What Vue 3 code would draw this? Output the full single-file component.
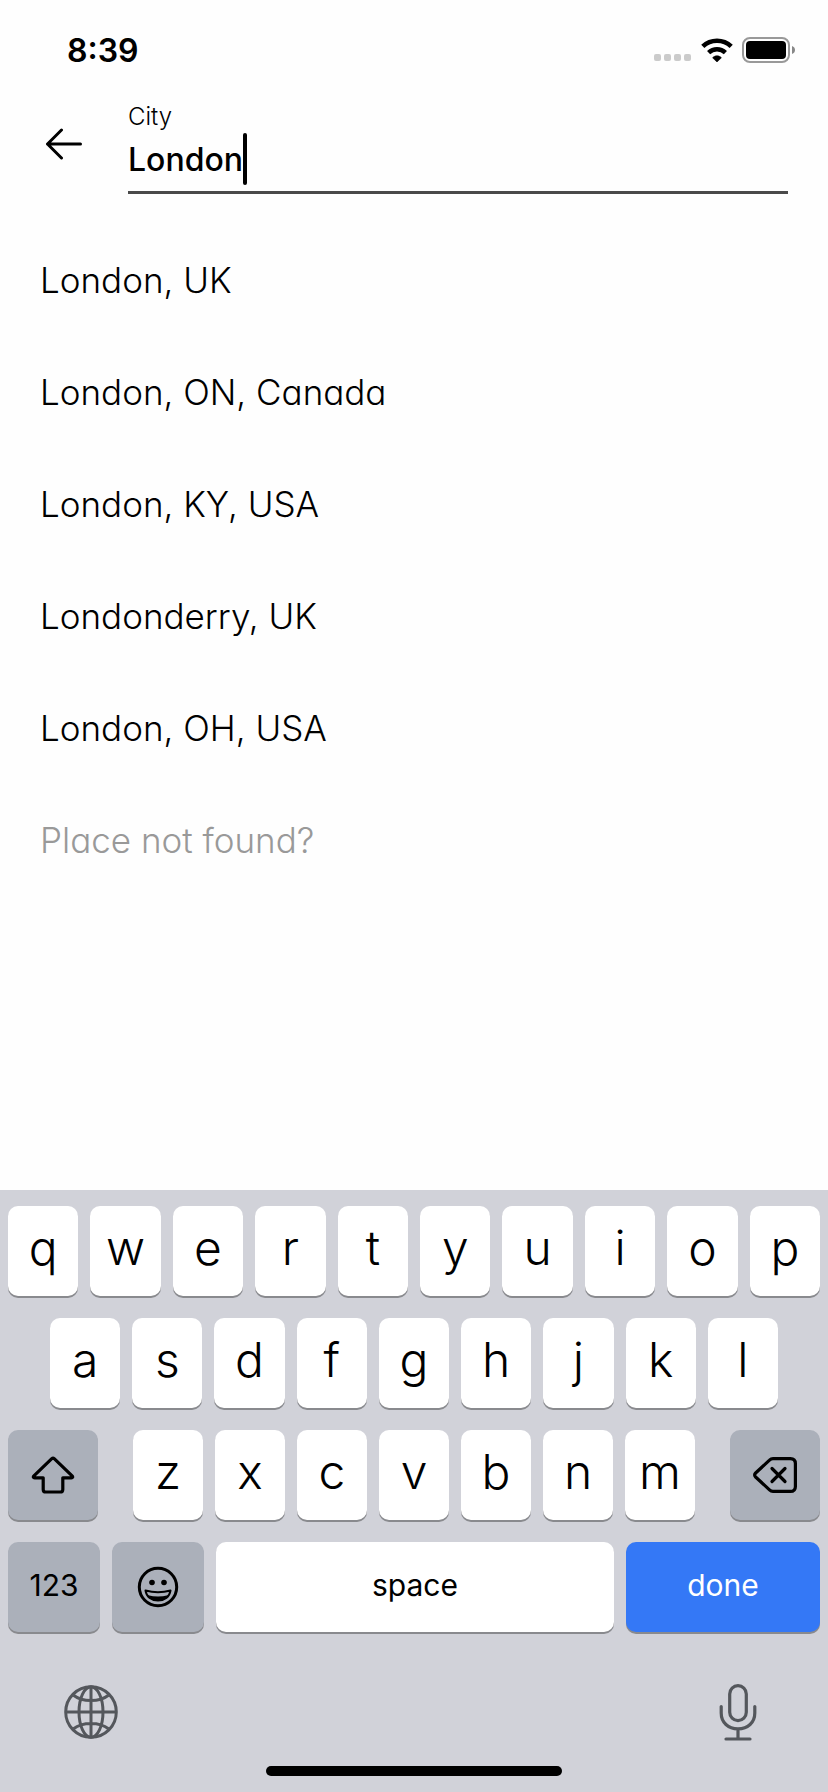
<script setup>
import { ref } from 'vue'

const city = ref('London')
const places = [
  'London, UK',
  'London, ON, Canada',
  'London, KY, USA',
  'Londonderry, UK',
  'London, OH, USA',
]
const topRow = 'qwertyuiop'.split('')
const homeRow = 'asdfghjkl'.split('')
const bottomRow = 'zxcvbnm'.split('')

const type = (ch) => { city.value += ch }
const erase = () => { city.value = city.value.slice(0, -1) }
</script>

<template>
  <div class="screen">
    <div class="status">
      <span class="time">8:39</span>
      <div class="indicators">
        <svg width="38" height="24" viewBox="0 0 38 24" fill="#cbcbcb">
          <rect x="0" y="16" width="7" height="7" rx="2" />
          <rect x="10" y="16" width="7" height="7" rx="2" />
          <rect x="20" y="16" width="7" height="7" rx="2" />
          <rect x="30" y="16" width="7" height="7" rx="2" />
        </svg>
        <svg width="32" height="24" viewBox="0 0 32 24">
          <g fill="none" stroke="#000" stroke-width="4.6">
            <path d="M1.8 8.4a20.6 20.6 0 0 1 28.4 0" />
            <path d="M7.6 14.6a12.4 12.4 0 0 1 16.8 0" />
          </g>
          <path d="M16 24l-4.4-4.2c2.4-2.6 6.400-2.6 8.800 0z" stroke="#000" stroke-width=".6" />
        </svg>
        <svg width="54" height="26" viewBox="0 0 54 26">
          <rect x="1" y="1" width="46" height="24" rx="7" fill="none" stroke="#999" stroke-width="2" />
          <rect x="4" y="4" width="40" height="18" rx="4" />
          <path d="M50 9c4 1.300 4 6.700 0 8z" fill="#888" />
        </svg>
      </div>
    </div>

    <header class="search">
      <button class="back" aria-label="Back">
        <svg width="38" height="32" viewBox="0 0 38 32" fill="none" stroke="#000" stroke-width="3" stroke-linecap="round" stroke-linejoin="round">
          <path d="M35.500 16H2.500M16.500 2L2.500 16l14 14" />
        </svg>
      </button>
      <div class="field">
        <label for="city">City</label>
        <div class="entry">
          <input id="city" v-model="city" type="text" autocomplete="off" size="6" />
          <span class="caret"></span>
        </div>
      </div>
    </header>

    <ul class="places">
      <li v-for="p in places" :key="p"><button>{{ p }}</button></li>
      <li><button class="muted">Place not found?</button></li>
    </ul>

    <div class="keyboard">
      <div class="row">
        <button v-for="k in topRow" :key="k" class="key" @click="type(k)">{{ k }}</button>
      </div>
      <div class="row home">
        <button v-for="k in homeRow" :key="k" class="key" @click="type(k)">{{ k }}</button>
      </div>
      <div class="row third">
        <button class="key dark side" aria-label="Shift">
          <svg width="44" height="38" viewBox="0 0 44 38" fill="none" stroke="#000" stroke-width="3.200" stroke-linejoin="round">
            <path d="M20.800 2.700 2.900 19.900c-1 1-.6 1.900.7 1.900h8.600v11.600c0 1.800.8 2.600 2.600 2.600h14.400c1.800 0 2.600-.8 2.600-2.600V21.800h8.600c1.300 0 1.700-.9.7-1.900L23.200 2.700q-1.200-1.100-2.400 0z" />
          </svg>
        </button>
        <div class="letters">
          <button v-for="k in bottomRow" :key="k" class="key" @click="type(k)">{{ k }}</button>
        </div>
        <button class="key dark side" aria-label="Delete" @click="erase">
          <svg width="44" height="38" viewBox="0 0 44 38" fill="none" stroke="#000" stroke-width="3.200" stroke-linejoin="round" stroke-linecap="round">
            <path d="M20 2.600h17.400q5 0 5 5v22.800q0 5-5 5H20q-2 0-3.500-1.500L2.600 21q-2-2 0-4L16.500 4.100Q18 2.600 20 2.600z" />
            <path d="M19 12.500 32 25.500M32 12.500 19 25.500" />
          </svg>
        </button>
      </div>
      <div class="row">
        <button class="key dark word mode">123</button>
        <button class="key dark mode emoji" aria-label="Emoji">
          <svg width="42" height="42" viewBox="0 0 42 42">
            <circle cx="21" cy="21" r="18.700" fill="none" stroke="#000" stroke-width="3" />
            <circle cx="15" cy="16.500" r="2.800" />
            <circle cx="27" cy="16.500" r="2.800" />
            <path d="M8.500 24.500q12.500 3.400 25 0c-1 6.400-6 10-12.500 10S9.500 30.900 8.500 24.500z" fill="none" stroke="#000" stroke-width="2" stroke-linejoin="round" />
            <path d="M11 29.200q10 2.400 20 0c-2 3.800-6 5.300-10 5.300s-8-1.500-10-5.300z" />
          </svg>
        </button>
        <button class="key word space" @click="type(' ')">space</button>
        <button class="key word done">done</button>
      </div>

      <div class="tools">
        <button aria-label="Next keyboard">
          <svg width="56" height="56" viewBox="0 0 56 56" fill="none" stroke="#54575c" stroke-width="3">
            <circle cx="28" cy="28" r="25.300" />
            <ellipse cx="28" cy="28" rx="12" ry="25.300" />
            <path d="M28 2.700v50.600M2.700 28h50.600M10.500 11.200c9 7 26 7 35 0M10.500 44.800c9-7 26-7 35 0" />
          </svg>
        </button>
        <button aria-label="Dictation">
          <svg width="38" height="58" viewBox="0 0 38 58" fill="none" stroke="#54575c" stroke-width="3.200" stroke-linecap="round">
            <rect x="10.700" y="2.600" width="16.600" height="35" rx="8.300" />
            <path d="M2.200 23.500v6.500c0 9.600 7 15.800 16.800 15.800S35.800 39.600 35.800 30v-6.500M19 46v10M7 56h24" />
          </svg>
        </button>
      </div>
      <div class="home-bar"></div>
    </div>
  </div>
</template>

<style>
body {
  margin: 0;
  background: #fefefe;
}
</style>

<style scoped>
.screen {
  min-height: 100vh;
  display: flex;
  flex-direction: column;
  font-family: Inter, "Liberation Sans", sans-serif;
  color: #000;
}
svg {
  display: block;
  flex: none;
}
button {
  border: 0;
  padding: 0;
  background: none;
  font: inherit;
  color: inherit;
}
.status {
  height: 100px;
  padding: 0 32px 0 67px;
  display: flex;
  align-items: center;
  justify-content: space-between;
}
.time {
  font-size: 32px;
  font-weight: 600;
}
.indicators {
  display: flex;
  align-items: center;
  gap: 9px;
}
.search {
  display: flex;
  align-items: flex-start;
  padding: 0 40px 0 45px;
}
.back {
  width: 83px;
  padding-top: 28px;
}
.field {
  flex: 1;
  display: flex;
  flex-direction: column;
  border-bottom: 3px solid #4a4a4a;
}
.field label {
  font-size: 24px;
  font-weight: 300;
  line-height: 33px;
}
.entry {
  height: 58px;
  display: flex;
  align-items: flex-start;
}
.entry input {
  field-sizing: content;
  min-width: 0;
  height: 52px;
  padding: 0;
  border: 0;
  outline: 0;
  background: none;
  font: inherit;
  font-size: 32px;
  font-weight: 500;
  color: inherit;
  caret-color: transparent;
}
.caret {
  width: 4px;
  height: 52px;
  border-radius: 2px;
  background: #000;
}
.places {
  list-style: none;
  margin: 30px 0 0;
  padding: 0;
}
.places button {
  display: block;
  width: 100%;
  height: 112px;
  padding: 0 40px;
  text-align: left;
  font-size: 35px;
  font-weight: 300;
  font-feature-settings: "cv11";
}
.places .muted {
  color: #999;
}
.keyboard {
  margin-top: auto;
  padding: 16px 8px;
  background: #d1d2d9;
}
.row {
  display: flex;
  gap: 12px;
  margin-bottom: 22px;
}
.home {
  padding: 0 42px;
}
.key {
  flex: 1 1 0;
  min-width: 0;
  height: 90px;
  padding-bottom: 8px;
  border-radius: 10px;
  background: #fff;
  box-shadow: 0 2px 0 #898a8e;
  font-size: 48px;
  font-weight: 300;
  display: flex;
  align-items: center;
  justify-content: center;
}
.dark {
  background: #abb0ba;
}
.third {
  gap: 35px;
}
.side {
  flex: 0 0 90px;
  padding: 0;
}
.letters {
  flex: 1;
  display: flex;
  gap: 12px;
}
.word {
  padding-bottom: 4px;
  font-size: 30px;
  font-weight: 400;
}
.mode {
  flex: 0 0 92px;
}
.emoji {
  padding: 0;
}
.space {
  flex: 398 1 0;
}
.done {
  flex: 194 1 0;
  background: #3478f6;
  color: #fff;
}
.tools {
  display: flex;
  align-items: center;
  justify-content: space-between;
  padding: 29px 63px 0 55px;
}
.home-bar {
  width: 296px;
  height: 10px;
  margin: 25px auto 0;
  border-radius: 5px;
  background: #000;
}
</style>
